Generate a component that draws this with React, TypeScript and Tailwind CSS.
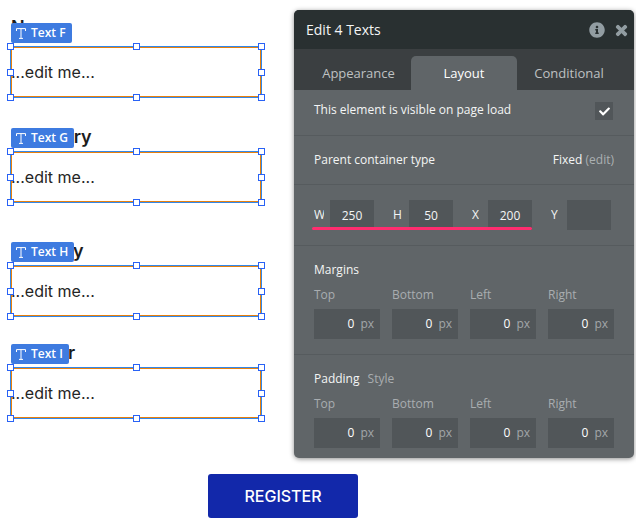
import { FaCheck, FaInfoCircle, FaTimes } from "react-icons/fa";

const handles = [
  "left-[-3px] top-[-3px]",
  "left-[123px] top-[-3px]",
  "left-[248px] top-[-3px]",
  "left-[-3px] top-[23px]",
  "left-[248px] top-[23px]",
  "left-[-3px] top-[48px]",
  "left-[123px] top-[48px]",
  "left-[248px] top-[48px]",
];

type FieldProps = {
  heading: string;
  tag: string;
  tagWidth: string;
  className?: string;
  gap?: string;
};

function Field({ heading, tag, tagWidth, className = "", gap = "mt-1" }: FieldProps) {
  return (
    <div className={className}>
      <div className="h-5 whitespace-nowrap pl-px text-[18px] font-semibold leading-5 text-[#1c1c1c]">{heading}</div>
      <div className={`relative h-[52px] w-[252px] border border-[#3288ea] ${gap}`}>
        <div className="flex h-full items-center border border-[#e8800d] text-[16px] text-[#252525]">
          <span className="-ml-px">...edit me...</span>
        </div>
        <div className="absolute inset-[-1px]">
          {handles.map((position) => (
            <i key={position} className={`absolute size-[7px] border border-[#2962f5] bg-white ${position}`} />
          ))}
          <div
            className={`absolute -top-[23px] left-px flex h-5 items-center rounded-[2px] bg-[#3e7be0] pl-[5px] font-['Open_Sans',sans-serif] text-[12px] font-semibold text-white ${tagWidth}`}
          >
            <svg className="mr-[5px] shrink-0" width="10" height="11" viewBox="0 0 10 11" fill="none" stroke="white">
              <path d="M.5 3V.6h9V3M5 .6v9.8M3 10.4h4" />
            </svg>
            <span className="whitespace-nowrap">{tag}</span>
          </div>
        </div>
      </div>
    </div>
  );
}

function Sides() {
  return (
    <div className="flex gap-3">
      {["Top", "Bottom", "Left", "Right"].map((side) => (
        <div key={side} className="w-[66px]">
          <div className="h-[23px] text-[12px] leading-[18px] text-[#a9adb0]">{side}</div>
          <div className="flex h-[30px] items-center justify-end bg-[#515659] pr-[6px] text-white">
            <span>0</span>
            <span className="ml-[6px] text-[#a3a7a9]">px</span>
          </div>
        </div>
      ))}
    </div>
  );
}

const dimensions = [
  { label: "W", value: "250" },
  { label: "H", value: "50" },
  { label: "X", value: "200" },
  { label: "Y", value: "" },
];

function Editor() {
  return (
    <section className="mt-[10px] h-[448px] w-[340px] overflow-hidden rounded-[5px] bg-[#606568] font-['Open_Sans',sans-serif] text-[12px] text-[#f4f5f5] shadow-[0_1px_5px_rgba(0,0,0,0.45)]">
      <header className="flex h-[39px] items-center bg-[#293031] pl-3 pr-[5px] text-[14px]">
        <span>Edit 4 Texts</span>
        <FaInfoCircle className="ml-auto mt-px text-[#929da2]" size={16} />
        <FaTimes className="ml-[9px] mt-[2px] stroke-[#929da2] stroke-[36px] text-[#929da2]" size={15} />
      </header>
      <nav className="flex h-[41px] items-end bg-[#3b3f41] text-center text-[13px] leading-[34px] text-[#bfc1c2]">
        <span className="w-[117px] pl-3">Appearance</span>
        <span className="w-[106px] rounded-t-[5px] bg-[#606568] text-white">Layout</span>
        <span className="w-[117px] pr-[13px]">Conditional</span>
      </nav>
      <div className="flex h-[46px] items-start justify-between border-b border-[#565b5e] pl-5 pr-[21px] pt-3">
        <span className="-mt-[1px] leading-[18px]">This element is visible on page load</span>
        <span className="flex size-[18px] items-center justify-center bg-[#515659] text-white">
          <FaCheck size={11} />
        </span>
      </div>
      <div className="flex h-[49px] items-center justify-between border-b border-[#565b5e] px-5">
        <span>Parent container type</span>
        <span>
          Fixed <span className="text-[#abb0b2]">(edit)</span>
        </span>
      </div>
      <div className="h-[61px] border-b border-[#565b5e] pl-[18px] pt-[15px]">
        <div className="relative flex h-[30px] gap-[19px] pl-[2px]">
          {dimensions.map(({ label, value }) => (
            <div key={label} className="flex w-[60px] justify-between">
              <span className="max-w-[10px] overflow-hidden leading-[29px]">{label}</span>
              <span className="h-[30px] w-[44px] bg-[#515659] text-center leading-[31px]">{value}</span>
            </div>
          ))}
          <i className="absolute bottom-0 left-0 h-[3px] w-[220px] rounded-full bg-[#ff2d6f]" />
        </div>
      </div>
      <div className="h-[109px] border-b border-[#565b5e] pl-5 pt-[15px]">
        <div className="mb-[7px] leading-[18px]">Margins</div>
        <Sides />
      </div>
      <div className="pl-5 pt-[15px]">
        <div className="mb-[7px] leading-[18px]">
          Padding <span className="ml-[5px] text-[#a9adb0]">Style</span>
        </div>
        <Sides />
      </div>
    </section>
  );
}

export default function App() {
  return (
    <main className="h-[523px] w-[636px] overflow-hidden bg-white font-['Inter',sans-serif]">
      <div className="flex h-[458px]">
        <div className="w-[294px] shrink-0 pl-[10px] pt-[18px]">
          <Field heading="Name" tag="Text F" tagWidth="w-[61px]" gap="mt-2" />
          <Field heading="Category" tag="Text G" tagWidth="w-[63px]" className="mt-[29px]" />
          <Field heading="Industry" tag="Text H" tagWidth="w-[63px]" className="mt-[38px]" />
          <Field heading="Gender" tag="Text I" tagWidth="w-[58px]" className="mt-[26px]" />
        </div>
        <Editor />
      </div>
      <button className="ml-[208px] mt-4 flex h-11 w-[150px] items-center justify-center rounded-[3px] bg-[#1228aa] text-[16px] font-medium text-white">
        REGISTER
      </button>
    </main>
  );
}
